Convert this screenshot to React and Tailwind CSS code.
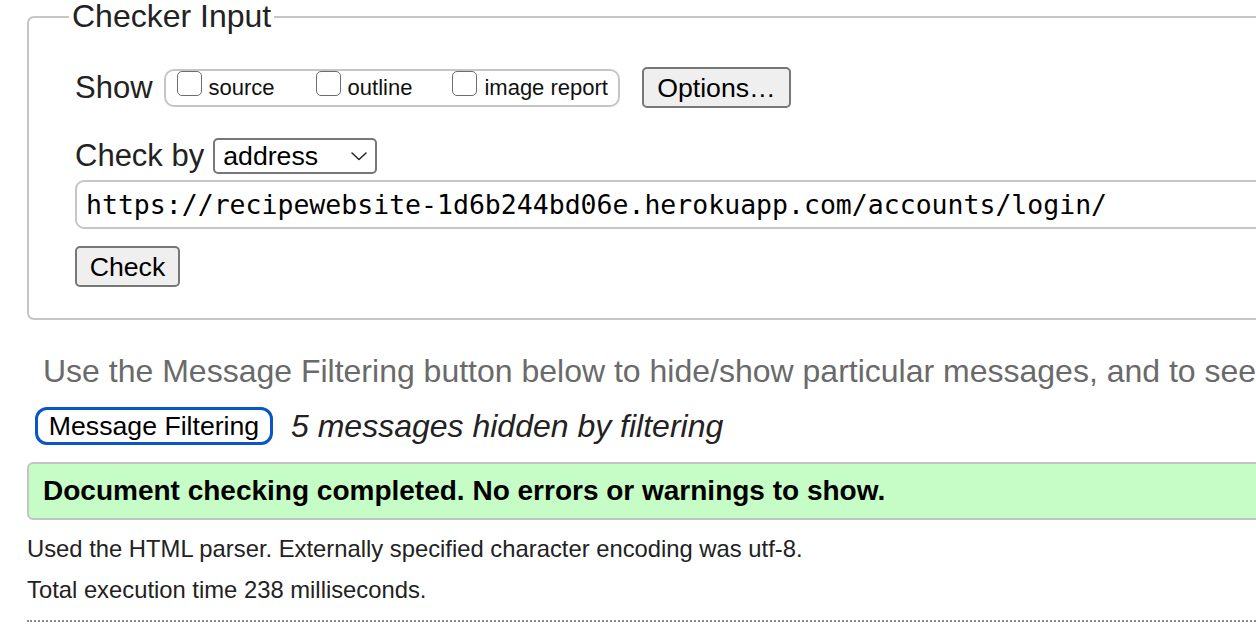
import React from "react";

function Box({ label }) {
  return (
    <div className="flex items-end h-full">
      <span className="w-[25px] h-[25px] mb-[9px] border-[1.5px] border-[#6e6e6e] rounded-[5px] bg-white shrink-0" />
      <span className="ml-[7px] text-[22px] leading-[26px] mb-[4px] text-[#111]">{label}</span>
    </div>
  );
}

export default function App() {
  return (
    <div className="w-[1256px] h-[638px] overflow-hidden bg-white text-[#222] font-['Liberation_Sans',Arial,sans-serif]">
      <div className="w-[1700px] pl-[27px]">
        <fieldset className="-mt-[2px] border-2 border-[#c6c6c6] rounded-[7px] pl-[40px] pt-[32px] pb-[31px] w-[1500px]">
          <legend className="px-[3px] text-[32px] leading-[37px] text-[#222]">Checker Input</legend>
          <div className="ml-[6px]">
            {/* Row 1 */}
            <div className="flex items-center h-[41px]">
              <span className="text-[31px] leading-[36px]">Show</span>
              <div className="ml-[11px] h-[38px] border-2 border-[#c6c6c6] rounded-[10px] flex items-stretch pl-[11px] pr-[10px]">
                <Box label="source" />
                <div className="ml-[41px] h-full"><Box label="outline" /></div>
                <div className="ml-[40px] h-full"><Box label="image report" /></div>
              </div>
              <button className="ml-[22px] w-[149px] h-[41px] bg-[#efefef] border-2 border-[#777] rounded-[5px] text-[26.67px] leading-[30px] text-black flex items-center justify-center">
                Options…
              </button>
            </div>
            {/* Row 2 */}
            <div className="flex items-center h-[36px] mt-[30px]">
              <span className="text-[31px] leading-[36px]">Check by</span>
              <div className="ml-[9px] w-[164px] h-[36px] border-2 border-[#777] rounded-[5px] flex items-center pl-[8px] pr-[6px] justify-between bg-white">
                <span className="text-[26.67px] leading-[30px] text-black">address</span>
                <svg width="18" height="10" viewBox="0 0 18 10" className="mr-[1px]">
                  <path d="M2 2 L9 8.5 L16 2" fill="none" stroke="#222" strokeWidth="1.5" strokeLinecap="round" strokeLinejoin="round" />
                </svg>
              </div>
            </div>
            {/* URL input */}
            <div className="mt-[6px] h-[49px] w-[1440px] border-2 border-[#c6c6c6] rounded-[9px] flex items-center pl-[9px]">
              <span className="font-['DejaVu_Sans_Mono',Menlo,monospace] text-[26.5px] leading-[30px] text-black whitespace-nowrap">
                https://recipewebsite-1d6b244bd06e.herokuapp.com/accounts/login/
              </span>
            </div>
            {/* Check button */}
            <button className="mt-[17px] w-[105px] h-[41px] bg-[#efefef] border-2 border-[#777] rounded-[5px] text-[26.67px] leading-[30px] text-black flex items-center justify-center">
              Check
            </button>
          </div>
        </fieldset>

        <p className="mt-[33px] pl-[16px] text-[32px] leading-[36px] text-[#6a6a6a] whitespace-nowrap">
          Use the Message Filtering button below to hide/show particular messages, and to see total counts of errors and warnings.
        </p>

        <div className="mt-[18px] flex items-center h-[38px]">
          <button className="ml-[8px] w-[238px] h-[38px] border-[3px] border-[#0a56c6] rounded-[12px] bg-white text-[26.67px] leading-[30px] text-black flex items-center justify-center">
            Message Filtering
          </button>
          <span className="ml-[18px] italic text-[32px] leading-[36px] text-[#222]">5 messages hidden by filtering</span>
        </div>

        <div className="mt-[17px] h-[58px] w-[1500px] bg-[#c6fdc6] border-2 border-[#c4c4c4] rounded-[6px] flex items-center pl-[14px]">
          <span className="font-bold text-[28px] leading-[32px] text-black whitespace-nowrap">
            Document checking completed. No errors or warnings to show.
          </span>
        </div>

        <p className="mt-[15px] text-[23.8px] leading-[28px] text-[#222] whitespace-nowrap">
          Used the HTML parser. Externally specified character encoding was utf-8.
        </p>
        <p className="mt-[13px] text-[23.8px] leading-[28px] text-[#222] whitespace-nowrap">
          Total execution time 238 milliseconds.
        </p>
        <div className="mt-[16px] w-[1500px] border-t-2 border-dotted border-[#8a8a8a]" />
      </div>
    </div>
  );
}
